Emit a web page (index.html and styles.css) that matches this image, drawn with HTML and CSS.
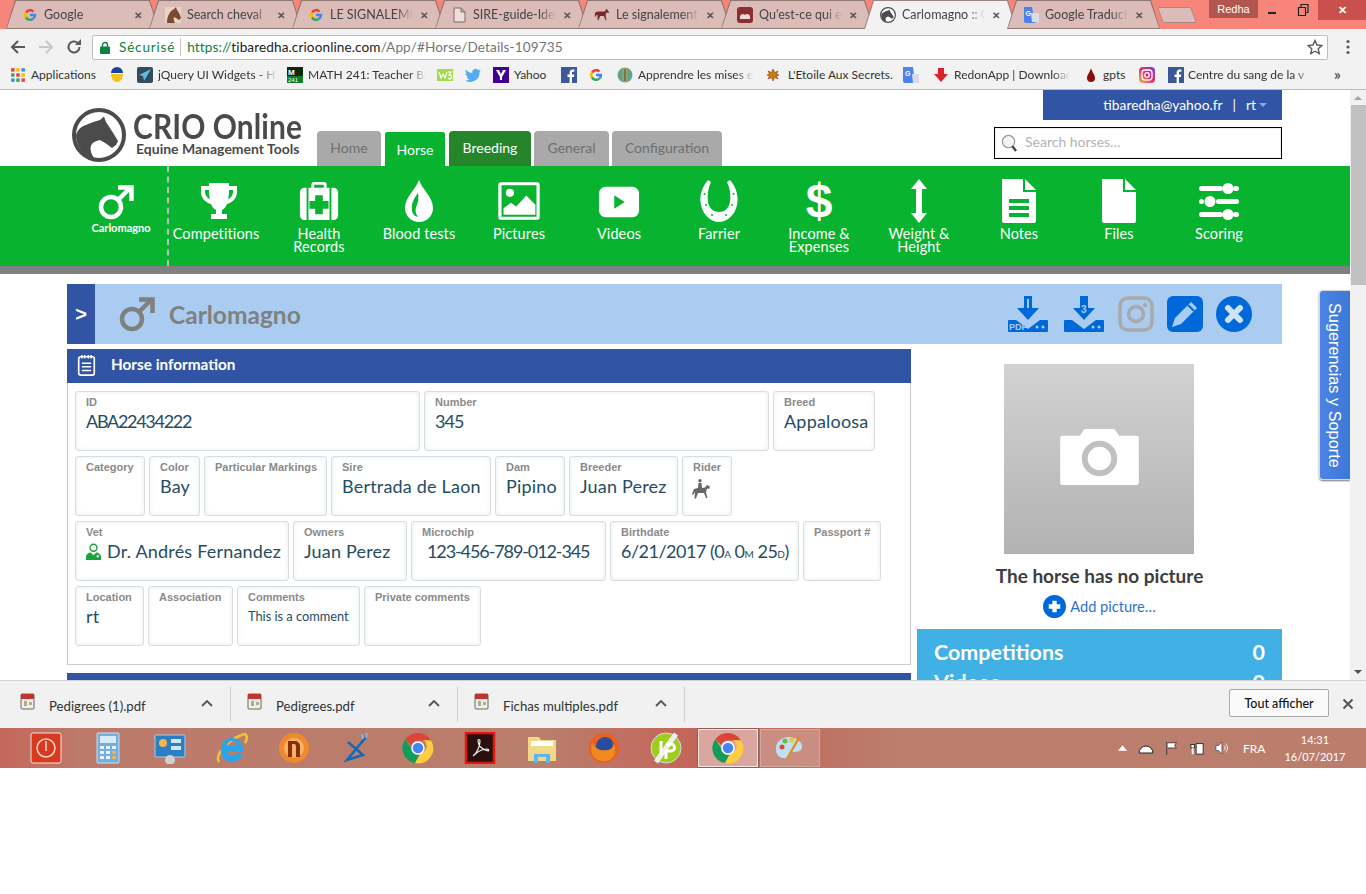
FILE: index.html
```html
<!DOCTYPE html>
<html lang="en">
<head>
<meta charset="utf-8">
<title>Carlomagno :: CRIO Online</title>
<link rel="stylesheet" href="styles.css">
</head>
<body>
<svg class="defs" width="0" height="0">
  <symbol id="g" viewBox="0 0 16 16">
    <path d="M3 4.500A6 6 0 0 1 12.300 3.700L10.600 5.400A3.600 3.600 0 0 0 5 6.500z" fill="#e94335"/>
    <path d="M3 4.500A6 6 0 0 0 3 11.500L5 9.600A3.600 3.600 0 0 1 5 6.500z" fill="#fbbc05"/>
    <path d="M3 11.500A6 6 0 0 0 12 12.500L10.200 10.900A3.600 3.600 0 0 1 5 9.600z" fill="#34a853"/>
    <path d="M14 6.800H8v2.500h3.500A3 3 0 0 1 10.200 10.900L12 12.500A6 6 0 0 0 14 6.800z" fill="#4285f4"/>
  </symbol>
  <symbol id="horsehead" viewBox="0 0 16 16">
    <rect width="16" height="16" fill="#e8d4c4"/>
    <path d="M2 16C2 9 5 4 9 2l2-2 1 3c2 2 3 5 4 8l-2 2-3-2-2-1c-1 2 0 4 1 6z" fill="#7a4a32"/>
  </symbol>
  <symbol id="pony" viewBox="0 0 18 16">
    <path d="M1 6c1-2 3-2 5-2h6l2-3 1 1 2 3-1 1-2-1-1 3 1 6h-1l-2-5H7l-2 5H4l0-6C3 8 2 8 2 10H1z" fill="#7a2a2a"/>
  </symbol>
  <symbol id="logo" viewBox="0 0 54 54">
    <circle cx="27" cy="27" r="25" fill="#fff" stroke="#4b4b4b" stroke-width="4"/>
    <path d="M4 27C6 21 10 18 15 16.500C20 14 25 13 28 12L32 8.500L34 14C38 20 42 26 46 33L44 37L40 40L34 35.500L28 32C23 33 19 35 18.500 40C18.500 44 20 47 22 50A23.500 23.500 0 0 1 4 27z" fill="#4b4b4b"/>
  </symbol>
  <symbol id="male" viewBox="0 0 36 36">
    <circle cx="13" cy="23" r="10" fill="none" stroke="currentColor" stroke-width="4.500"/>
    <path d="M20 16L32 4M20 3.500h13.500V17" fill="none" stroke="currentColor" stroke-width="4.500"/>
  </symbol>
  <symbol id="pdf" viewBox="0 0 16 18">
    <rect x="1" y="1" width="13" height="15" rx="1" fill="#f3efe6" stroke="#666" stroke-width="1"/>
    <rect x="1" y="1" width="13" height="5" fill="#c0362c"/>
    <path d="M4 8h3v5H4zM9 9h3v3H9z" fill="#b5a98f"/>
  </symbol>
  <symbol id="chrome" viewBox="0 0 32 32">
    <path d="M16 1a15 15 0 0 1 13 7.500H16a7.500 7.500 0 0 0-7 4.500L3.500 7A15 15 0 0 1 16 1z" fill="#db4437"/>
    <path d="M3.500 7L9 16a7 7 0 0 0 8 7l-4 8A15 15 0 0 1 3.500 7z" fill="#0f9d58"/>
    <path d="M29 8.500A15 15 0 0 1 13 31l6-10a7 7 0 0 0 2-13z" fill="#ffcd40"/>
    <circle cx="16" cy="16" r="6" fill="#4285f4" stroke="#fff" stroke-width="1.500"/>
  </symbol>
</svg>

<div class="screen">
  <div class="tabstrip">
    <div class="tab"><svg class="fav"><use href="#g"/></svg><span class="tab-title">Google</span><span class="tab-x">✕</span></div>
    <div class="tab"><svg class="fav"><use href="#horsehead"/></svg><span class="tab-title">Search cheval</span><span class="tab-x">✕</span></div>
    <div class="tab"><svg class="fav"><use href="#g"/></svg><span class="tab-title">LE SIGNALEME</span><span class="tab-x">✕</span></div>
    <div class="tab"><svg class="fav" viewBox="0 0 16 16"><path d="M3 1h7l4 4v10H3zM10 1v4h4" fill="#f0dcd8" stroke="#7c6a66"/></svg><span class="tab-title">SIRE-guide-Ider</span><span class="tab-x">✕</span></div>
    <div class="tab"><svg class="fav"><use href="#pony"/></svg><span class="tab-title">Le signalement</span><span class="tab-x">✕</span></div>
    <div class="tab"><svg class="fav" viewBox="0 0 16 16"><rect x="0" y="0" width="16" height="16" rx="3" fill="#8b2f2f"/><path d="M3 11a3 3 0 0 1 5-3 3 3 0 0 1 5 1v3H3z" fill="#f0d8d8"/></svg><span class="tab-title">Qu'est-ce qui e</span><span class="tab-x">✕</span></div>
    <div class="tab tab-on"><svg class="fav" viewBox="0 0 54 54"><use href="#logo"/></svg><span class="tab-title">Carlomagno :: C</span><span class="tab-x">✕</span></div>
    <div class="tab"><svg class="fav" viewBox="0 0 16 16"><path d="M1 0h8l3 16H3a2 2 0 0 1-2-2z" fill="#4c82ee"/><path d="M8 6h8v9H9z" fill="#d9dde2"/><text x="2.500" y="9" font-size="7" font-weight="700" fill="#fff" font-family="Liberation Sans">G</text></svg><span class="tab-title">Google Traduct</span><span class="tab-x">✕</span></div>
    <div class="newtab"></div>
    <div class="winbar">
      <span class="win-user">Redha</span>
      <span class="win-btn"><svg width="12" height="12" viewBox="0 0 12 12"><rect x="1" y="8" width="8" height="2" fill="#222"/></svg></span>
      <span class="win-btn"><svg width="14" height="14" viewBox="0 0 14 14"><path d="M2.500 4.500h7v8h-7zM5 4V1.500h7v8H10" fill="none" stroke="#222" stroke-width="1.200"/></svg></span>
      <span class="win-close">✕</span>
    </div>
  </div>

  <div class="toolbar">
    <svg class="tool" viewBox="0 0 16 16"><path d="M15 8H2M8 2L2 8l6 6" fill="none" stroke="#5a5a5a" stroke-width="2"/></svg>
    <svg class="tool" viewBox="0 0 16 16"><path d="M1 8h13M8 2l6 6-6 6" fill="none" stroke="#c8c8c8" stroke-width="2"/></svg>
    <svg class="tool" viewBox="0 0 16 16"><path d="M13.500 8A5.500 5.500 0 1 1 11.800 4" fill="none" stroke="#5a5a5a" stroke-width="2"/><path d="M9 6h6V0z" fill="#5a5a5a"/></svg>
    <div class="omnibox">
      <svg class="lock" viewBox="0 0 10 13"><path d="M2.500 6V4a2.500 2.500 0 0 1 5 0v2" fill="none" stroke="#0b8043" stroke-width="1.400"/><rect y="5.500" width="10" height="7.500" rx="1" fill="#0b8043"/></svg>
      <span class="secure">Sécurisé</span>
      <span class="omni-sep"></span>
      <span class="url"><span class="url-s">https://</span><span class="url-h">tibaredha.crioonline.com</span>/App/#Horse/Details-109735</span>
      <svg class="star" viewBox="0 0 16 16"><path d="M8 1.500l2 4.500 4.900.500-3.700 3.300 1.100 4.800L8 12.200l-4.300 2.400 1.100-4.800L1.100 6.500 6 6z" fill="none" stroke="#5a5a5a" stroke-width="1.400"/></svg>
    </div>
    <svg class="menu" viewBox="0 0 4 16"><circle cx="2" cy="2.500" r="1.600" fill="#5a5a5a"/><circle cx="2" cy="8" r="1.600" fill="#5a5a5a"/><circle cx="2" cy="13.500" r="1.600" fill="#5a5a5a"/></svg>
  </div>

  <div class="bookmarks">
    <span class="bm bm-apps"><svg class="bm-ic" viewBox="0 0 14 14"><g><rect x="1" y="1" width="3" height="3" fill="#e94335"/><rect x="5.500" y="1" width="3" height="3" fill="#fbbc05"/><rect x="10" y="1" width="3" height="3" fill="#4285f4"/><rect x="1" y="5.500" width="3" height="3" fill="#34a853"/><rect x="5.500" y="5.500" width="3" height="3" fill="#e94335"/><rect x="10" y="5.500" width="3" height="3" fill="#fbbc05"/><rect x="1" y="10" width="3" height="3" fill="#4285f4"/><rect x="5.500" y="10" width="3" height="3" fill="#34a853"/><rect x="10" y="10" width="3" height="3" fill="#e94335"/></g></svg><span class="bm-t">Applications</span></span>
    <span class="bm bm-w1"><svg class="bm-ic" viewBox="0 0 16 16"><path d="M2 6a6 6 0 0 1 12 0z" fill="#1a3f9c"/><path d="M2 7h12c0 5-3 8-6 8S2 12 2 7z" fill="#f0c420"/></svg></span>
    <span class="bm bm-w2"><svg class="bm-ic" viewBox="0 0 16 16"><rect width="16" height="16" rx="2" fill="#374a57"/><path d="M14 2L2 8l4 1 1 5z" fill="#58c1e6"/></svg><span class="bm-t bm-fade">jQuery UI Widgets - H</span></span>
    <span class="bm bm-w3"><svg class="bm-ic" viewBox="0 0 16 16"><rect width="16" height="16" fill="#0a2a0a"/><rect y="9" width="16" height="7" fill="#0e7d25"/><text x="1" y="7.500" font-size="8" font-weight="700" fill="#fff" font-family="Liberation Sans">M</text><text x="1" y="15" font-size="6" fill="#fff" font-family="Liberation Sans">241</text></svg><span class="bm-t bm-fade">MATH 241: Teacher Bi</span></span>
    <span class="bm bm-w4"><svg class="bm-ic" viewBox="0 0 16 16"><rect y="2" width="16" height="12" fill="#a5d94c"/><path d="M2 5l2 6 2-4 2 4 2-6M11 5h3l-2 3a2 2 0 1 1-1 3" fill="none" stroke="#fff" stroke-width="1.200"/></svg></span>
    <span class="bm bm-w5"><svg class="bm-ic" viewBox="0 0 16 16"><path d="M15.500 3.500c-.6.300-1.200.4-1.800.5.600-.4 1.100-1 1.400-1.700-.6.400-1.300.6-2 .8A3.200 3.200 0 0 0 7.500 6C4.900 5.900 2.600 4.600 1 2.700c-.9 1.500-.4 3.400 1 4.300-.5 0-1-.2-1.400-.4 0 1.600 1.100 2.900 2.600 3.200-.5.100-1 .2-1.500.1.400 1.300 1.600 2.200 3 2.200A6.500 6.500 0 0 1 .5 13.400 9.100 9.100 0 0 0 14.500 5.300c.4-.5 1-1.100 1-1.800z" fill="#55acee"/></svg></span>
    <span class="bm bm-w6"><svg class="bm-ic" viewBox="0 0 16 16"><rect width="16" height="16" fill="#410093"/><path d="M3 3h3l2 4 2-4h3l-4 7v3H7v-3z" fill="#fff"/></svg><span class="bm-t">Yahoo</span></span>
    <span class="bm bm-w7"><svg class="bm-ic" viewBox="0 0 16 16"><rect width="16" height="16" fill="#3b5998"/><path d="M11 16v-6h2l.3-2.500H11V6c0-.7.200-1.200 1.200-1.200h1.200V2.600c-.3 0-1-.1-1.800-.1C10.100 2.500 8.600 3.500 8.600 5.600v1.900H6.500V10h2.100v6z" fill="#fff"/></svg></span>
    <span class="bm bm-w8"><svg class="bm-ic"><use href="#g"/></svg></span>
    <span class="bm bm-w9"><svg class="bm-ic" viewBox="0 0 16 16"><circle cx="8" cy="8" r="7.500" fill="#5aa58c"/><rect x="5.500" y="1" width="5" height="14" fill="#a8a060"/><path d="M8 2v12" stroke="#444" stroke-width="1"/></svg><span class="bm-t bm-fade">Apprendre les mises e</span></span>
    <span class="bm bm-w10"><svg class="bm-ic bm-ic-sm" viewBox="0 0 12 12"><path d="M6 0l1.500 3.500L11 2l-1.500 3L12 6 9.500 7 11 10 7.500 8.500 6 12 4.500 8.500 1 10l1.500-3L0 6l2.500-1L1 2l3.500 1.500z" fill="#b8860b" stroke="#a11" stroke-width=".5"/></svg><span class="bm-t">L'Etoile Aux Secrets.</span></span>
    <span class="bm bm-w11"><svg class="bm-ic" viewBox="0 0 16 16"><path d="M0 0h10l2 16H2a2 2 0 0 1-2-2z" fill="#4c82ee"/><path d="M9 7h7v9H10z" fill="#d9dde2"/><text x="2" y="9" font-size="7" font-weight="700" fill="#fff" font-family="Liberation Sans">G</text></svg></span>
    <span class="bm bm-w12"><svg class="bm-ic" viewBox="0 0 16 16"><path d="M5 1h6v6h4l-7 8-7-8h4z" fill="#d8232a"/></svg><span class="bm-t bm-fade">RedonApp | Downloac</span></span>
    <span class="bm bm-w13"><svg class="bm-ic" viewBox="0 0 16 16"><path d="M8 1c1 4 4 7 4 10a4 4 0 0 1-8 0c0-3 3-6 4-10z" fill="#8a0f0f"/></svg><span class="bm-t">gpts</span></span>
    <span class="bm bm-w14"><svg class="bm-ic" viewBox="0 0 16 16"><defs><linearGradient id="ig" x1="0" y1="1" x2="1" y2="0"><stop offset="0" stop-color="#fdb24b"/><stop offset=".5" stop-color="#e1306c"/><stop offset="1" stop-color="#7d3bd1"/></linearGradient></defs><rect width="16" height="16" rx="4" fill="url(#ig)"/><rect x="3" y="3" width="10" height="10" rx="3" fill="none" stroke="#fff" stroke-width="1.300"/><circle cx="8" cy="8" r="2.300" fill="none" stroke="#fff" stroke-width="1.300"/></svg></span>
    <span class="bm bm-w15"><svg class="bm-ic" viewBox="0 0 16 16"><rect width="16" height="16" fill="#3b5998"/><path d="M11 16v-6h2l.3-2.500H11V6c0-.7.200-1.200 1.200-1.200h1.200V2.600c-.3 0-1-.1-1.800-.1C10.100 2.500 8.600 3.500 8.600 5.600v1.900H6.500V10h2.100v6z" fill="#fff"/></svg><span class="bm-t bm-fade">Centre du sang de la v</span></span>
    <span class="bm-more">»</span>
  </div>

  <div class="viewport">
    <div class="page">
      <header class="head">
        <div class="brand">
          <svg class="logo" viewBox="0 0 54 54"><use href="#logo"/></svg>
          <div class="brand-text">
            <div class="brand-name">CRIO Online</div>
            <div class="brand-sub">Equine Management Tools</div>
          </div>
        </div>
        <nav class="mainnav">
          <a class="mtab mtab-home">Home</a>
          <a class="mtab mtab-horse">Horse</a>
          <a class="mtab mtab-breed">Breeding</a>
          <a class="mtab mtab-gen">General</a>
          <a class="mtab mtab-conf">Configuration</a>
        </nav>
        <div class="head-right">
          <div class="userbox"><span>tibaredha@yahoo.fr</span><span class="user-sep">|</span><span>rt</span><span class="caret"></span></div>
          <div class="search">
            <svg class="search-ic" viewBox="0 0 18 20"><circle cx="8" cy="8" r="6.500" fill="#f4f4f4" stroke="#999" stroke-width="1.300"/><path d="M12 13l4 5" stroke="#444" stroke-width="2.500"/></svg>
            <span class="search-ph">Search horses…</span>
          </div>
        </div>
      </header>

      <div class="greenbar">
        <div class="gb-me">
          <svg class="gi-male"><use href="#male"/></svg>
          <span class="gb-me-t">Carlomagno</span>
        </div>
        <div class="gb-item gb-first">
          <svg class="gi" viewBox="0 0 40 40"><path d="M10 2h20v3h8v6c0 6-5 11-10 12-1 3-3 5-5 6v4h5v5H12v-5h5v-4c-2-1-4-3-5-6C7 22 2 17 2 11V5h8zM6 9v2c0 3 2 6 5 7-1-3-1-6-1-9zM34 9h-4c0 3 0 6-1 9 3-1 5-4 5-7z" fill="#fff" fill-rule="evenodd"/></svg>
          <span class="gb-t">Competitions</span>
        </div>
        <div class="gb-item">
          <svg class="gi" viewBox="0 0 44 40"><path d="M14 6V3a3 3 0 0 1 3-3h10a3 3 0 0 1 3 3v3h3v34H11V6zM17 6h10V3H17z" fill="#fff" fill-rule="evenodd"/><path d="M7 6h2v34H7a5 5 0 0 1-5-5V11a5 5 0 0 1 5-5zM35 6h2a5 5 0 0 1 5 5v24a5 5 0 0 1-5 5h-2z" fill="#fff"/><path d="M18 14h8v6h6v8h-6v6h-8v-6h-6v-8h6z" fill="#07b32f"/></svg>
          <span class="gb-t">Health<br>Records</span>
        </div>
        <div class="gb-item">
          <svg class="gi gi-tall" viewBox="0 0 40 44"><path d="M20 1c3 9 14 17 14 28a14 14 0 0 1-28 0C6 18 17 10 20 1z" fill="#fff"/><path d="M19 14c-4 5-7 11-6 17 0 3 2 6 6 7-3-4-3-8-1-12 1-3 2-7 1-12z" fill="#07b32f"/></svg>
          <span class="gb-t">Blood tests</span>
        </div>
        <div class="gb-item">
          <svg class="gi" viewBox="0 0 46 44"><rect x="2" y="3" width="42" height="38" rx="1" fill="none" stroke="#fff" stroke-width="3.500"/><circle cx="13" cy="13" r="4.500" fill="#fff"/><path d="M6 37v-7l8-6 6 4 11-12 10 10v11z" fill="#fff"/></svg>
          <span class="gb-t">Pictures</span>
        </div>
        <div class="gb-item">
          <svg class="gi" viewBox="0 0 44 40"><rect x="1" y="5" width="42" height="32" rx="7" fill="#fff"/><path d="M17 14l11 7-11 7z" fill="#07b32f"/></svg>
          <span class="gb-t">Videos</span>
        </div>
        <div class="gb-item">
          <svg class="gi gi-tall" viewBox="0 0 40 44"><path d="M9 1C3 8 0 17 2 26c2 10 10 17 18 17s16-7 18-17c2-9-1-18-7-25l-3 2c3 6 4 14 3 20-1 6-5 10-11 10S10 29 9 23C8 17 9 9 12 3z" fill="#fff"/><g fill="#07b32f"><circle cx="5.500" cy="15" r="1"/><circle cx="7" cy="26" r="1"/><circle cx="13" cy="36" r="1"/><circle cx="27" cy="36" r="1"/><circle cx="33" cy="26" r="1"/><circle cx="34.500" cy="15" r="1"/></g></svg>
          <span class="gb-t">Farrier</span>
        </div>
        <div class="gb-item">
          <span class="gi gi-dollar">$</span>
          <span class="gb-t">Income &amp;<br>Expenses</span>
        </div>
        <div class="gb-item">
          <svg class="gi gi-tall" viewBox="0 0 40 44"><path d="M20 0l8 10h-5v24h5l-8 10-8-10h5V10h-5z" fill="#fff"/></svg>
          <span class="gb-t">Weight &amp;<br>Height</span>
        </div>
        <div class="gb-item">
          <svg class="gi gi-tall" viewBox="0 0 40 44"><path d="M3 0h21v13h13v29a2 2 0 0 1-2 2H5a2 2 0 0 1-2-2z" fill="#fff"/><path d="M26 0l11 11H26z" fill="#fff"/><path d="M10 20h20v4H10zM10 27h20v4H10zM10 34h20v4H10z" fill="#07b32f"/></svg>
          <span class="gb-t">Notes</span>
        </div>
        <div class="gb-item">
          <svg class="gi gi-tall" viewBox="0 0 40 44"><path d="M3 0h21v13h13v29a2 2 0 0 1-2 2H5a2 2 0 0 1-2-2z" fill="#fff"/><path d="M26 0l11 11H26z" fill="#fff"/></svg>
          <span class="gb-t">Files</span>
        </div>
        <div class="gb-item">
          <svg class="gi" viewBox="0 0 42 40"><g fill="#fff"><rect x="1" y="5" width="24" height="5" rx="2.500"/><circle cx="30" cy="7.500" r="5.500"/><rect x="35" y="5" width="6" height="5" rx="2.500"/><rect x="1" y="18" width="5" height="5" rx="2.500"/><circle cx="12" cy="20.500" r="5.500"/><rect x="18" y="18" width="23" height="5" rx="2.500"/><rect x="1" y="31" width="24" height="5" rx="2.500"/><circle cx="30" cy="33.500" r="5.500"/><rect x="35" y="31" width="6" height="5" rx="2.500"/></g></svg>
          <span class="gb-t">Scoring</span>
        </div>
      </div>
      <div class="greybar"></div>

      <div class="content">
        <div class="titlebar">
          <div class="tb-toggle">&gt;</div>
          <svg class="tb-male"><use href="#male"/></svg>
          <h1 class="tb-name">Carlomagno</h1>
          <div class="tb-actions">
            <svg class="act act-dl act-dl1" viewBox="0 0 40 36"><path d="M16 0h8v12h7L20 24 9 12h7z" fill="#0069d9"/><path d="M1 24h7l12 9 12-9h7a1 1 0 0 1 1 1v10a1 1 0 0 1-1 1H1a1 1 0 0 1-1-1V25a1 1 0 0 1 1-1z" fill="#0069d9"/><path d="M19 3h2v9h-2z" fill="#a9ccf0"/><circle cx="29" cy="31" r="1.500" fill="#a9ccf0"/><circle cx="35" cy="31" r="1.500" fill="#a9ccf0"/><text x="1" y="34" font-size="9" font-weight="700" fill="#a9ccf0" font-family="Liberation Sans">PDF</text></svg>
            <svg class="act act-dl act-dl2" viewBox="0 0 40 36"><path d="M16 0h8v12h7L20 24 9 12h7z" fill="#0069d9"/><path d="M1 24h7l12 9 12-9h7a1 1 0 0 1 1 1v10a1 1 0 0 1-1 1H1a1 1 0 0 1-1-1V25a1 1 0 0 1 1-1z" fill="#0069d9"/><circle cx="29" cy="31" r="1.500" fill="#a9ccf0"/><circle cx="35" cy="31" r="1.500" fill="#a9ccf0"/><text x="17" y="17" font-size="10" font-weight="700" fill="#a9ccf0" font-family="Liberation Sans">3</text></svg>
            <svg class="act" viewBox="0 0 36 36"><rect x="2" y="2" width="32" height="32" rx="8" fill="none" stroke="#a9a9a9" stroke-width="3.500"/><circle cx="18" cy="18" r="7.500" fill="none" stroke="#a9a9a9" stroke-width="3.500"/><circle cx="27" cy="9" r="2.200" fill="#a9a9a9"/></svg>
            <svg class="act" viewBox="0 0 36 36"><rect width="36" height="36" rx="6" fill="#0069d9"/><path d="M24 6l6 6-16 16-9 3 3-9z" fill="#a9ccf0"/><path d="M21 9l6 6" stroke="#0069d9" stroke-width="2"/></svg>
            <svg class="act" viewBox="0 0 36 36"><circle cx="18" cy="18" r="18" fill="#0069d9"/><path d="M12 12l12 12M24 12L12 24" stroke="#cfe2f6" stroke-width="6" stroke-linecap="round"/></svg>
          </div>
        </div>

        <div class="columns">
          <section class="info">
            <div class="panel-head">
              <svg class="ph-ic" viewBox="0 0 20 24"><rect x="1.500" y="3" width="17" height="20" rx="2" fill="none" stroke="#fff" stroke-width="1.800"/><path d="M5 1v4M8 1v4M12 1v4M15 1v4M5 10h10M5 14h10M5 18h10" stroke="#fff" stroke-width="1.600"/></svg>
              <span class="ph-t">Horse information</span>
            </div>
            <div class="panel-body">
              <div class="frow">
                <div class="fld w345"><label class="lbl">ID</label><div class="val val-id">ABA22434222</div></div>
                <div class="fld w345"><label class="lbl">Number</label><div class="val val-num">345</div></div>
                <div class="fld w102"><label class="lbl">Breed</label><div class="val">Appaloosa</div></div>
              </div>
              <div class="frow">
                <div class="fld w70"><label class="lbl">Category</label></div>
                <div class="fld w51"><label class="lbl">Color</label><div class="val">Bay</div></div>
                <div class="fld w123"><label class="lbl">Particular Markings</label></div>
                <div class="fld w160"><label class="lbl">Sire</label><div class="val">Bertrada de Laon</div></div>
                <div class="fld w70"><label class="lbl">Dam</label><div class="val">Pipino</div></div>
                <div class="fld w109"><label class="lbl">Breeder</label><div class="val">Juan Perez</div></div>
                <div class="fld w50"><label class="lbl">Rider</label>
                  <svg class="rider" viewBox="0 0 20 20"><circle cx="9" cy="1.800" r="1.700" fill="#666"/><path d="M7.500 4h3l.5 5 3-.5 2-2.500 3 1.500-1 2.500-2-.5-1 4 1.500 5.500h-1.500L13 14H7l-2 5.500H3.500L4 13l-2 3-1-1 2-5 4-1z" fill="#666"/></svg>
                </div>
              </div>
              <div class="frow">
                <div class="fld w214"><label class="lbl">Vet</label><div class="val val-vet">
                  <svg class="vet" viewBox="0 0 18 18"><circle cx="9" cy="5" r="3.700" fill="#fff" stroke="#1aa33a" stroke-width="1.500"/><path d="M1 18v-3c0-3 3-5 5-5l3 3 3-3c2 0 5 2 5 5v3z" fill="#1aa33a"/><path d="M12 14h3M13.500 12.500v3" stroke="#fff"/></svg><span>Dr. Andrés Fernandez</span></div></div>
                <div class="fld w114"><label class="lbl">Owners</label><div class="val">Juan Perez</div></div>
                <div class="fld w195"><label class="lbl">Microchip</label><div class="val val-chip">123-456-789-012-345</div></div>
                <div class="fld w189"><label class="lbl">Birthdate</label><div class="val val-date">6/21/2017 (0<small>A</small> 0<small>M</small> 25<small>D</small>)</div></div>
                <div class="fld w78"><label class="lbl">Passport #</label></div>
              </div>
              <div class="frow">
                <div class="fld w69"><label class="lbl">Location</label><div class="val">rt</div></div>
                <div class="fld w85"><label class="lbl">Association</label></div>
                <div class="fld w123"><label class="lbl">Comments</label><div class="val-sm">This is a comment</div></div>
                <div class="fld w117"><label class="lbl">Private comments</label></div>
              </div>
            </div>
            <div class="panel-head panel-next"></div>
          </section>

          <aside class="side">
            <div class="photo">
              <svg class="camera" viewBox="0 0 80 58"><path d="M2 8h18l4-6a3 3 0 0 1 2-1h28a3 3 0 0 1 2 1l4 6h18a2 2 0 0 1 2 2v46a2 2 0 0 1-2 2H2a2 2 0 0 1-2-2V10a2 2 0 0 1 2-2z" fill="#fff"/><circle cx="40" cy="31" r="15" fill="none" stroke="#c0c0c0" stroke-width="6"/></svg>
            </div>
            <div class="nopic">The horse has no picture</div>
            <div class="addpic">
              <svg class="add-ic" viewBox="0 0 24 24"><circle cx="12" cy="12" r="12" fill="#0069d9"/><path d="M12 6v12M6 12h12" stroke="#fff" stroke-width="4.500"/></svg>
              <span>Add picture…</span>
            </div>
            <div class="stats">
              <div class="stat"><span>Competitions</span><span>0</span></div>
              <div class="stat"><span>Videos</span><span>0</span></div>
            </div>
          </aside>
        </div>
      </div>

      <a class="support">Sugerencias y Soporte</a>
    </div>

    <div class="scroll">
      <span class="sc-up"></span>
      <span class="sc-thumb"></span>
      <span class="sc-track"></span>
      <span class="sc-dn"></span>
    </div>
  </div>

  <div class="downloads">
    <div class="dl"><svg class="dl-ic"><use href="#pdf"/></svg><span class="dl-t">Pedigrees (1).pdf</span><svg class="dl-ch" viewBox="0 0 12 8"><path d="M1 7l5-5 5 5" fill="none" stroke="#555" stroke-width="1.800"/></svg></div>
    <div class="dl"><svg class="dl-ic"><use href="#pdf"/></svg><span class="dl-t">Pedigrees.pdf</span><svg class="dl-ch" viewBox="0 0 12 8"><path d="M1 7l5-5 5 5" fill="none" stroke="#555" stroke-width="1.800"/></svg></div>
    <div class="dl"><svg class="dl-ic"><use href="#pdf"/></svg><span class="dl-t">Fichas multiples.pdf</span><svg class="dl-ch" viewBox="0 0 12 8"><path d="M1 7l5-5 5 5" fill="none" stroke="#555" stroke-width="1.800"/></svg></div>
    <button class="dl-all">Tout afficher</button>
    <svg class="dl-x" viewBox="0 0 12 12"><path d="M1.500 1.500l9 9M10.500 1.500l-9 9" stroke="#555" stroke-width="2"/></svg>
  </div>

  <div class="taskbar">
    <div class="task"><svg class="ti" viewBox="0 0 32 32"><rect x="1" y="1" width="30" height="30" rx="2" fill="#d83a1e" stroke="#f3e3dd"/><circle cx="16" cy="16" r="9" fill="none" stroke="#f8d8cc" stroke-width="1.500"/><path d="M16 9v10" stroke="#f8d8cc" stroke-width="1.500"/></svg></div>
    <div class="task"><svg class="ti" viewBox="0 0 32 32"><rect x="5" y="1" width="22" height="30" rx="1" fill="#6fb0e0" stroke="#c8dff0"/><rect x="8" y="4" width="16" height="7" fill="#d8ecf8"/><g fill="#e8f2fa"><rect x="8" y="14" width="4" height="3"/><rect x="14" y="14" width="4" height="3"/><rect x="20" y="14" width="4" height="3"/><rect x="8" y="19" width="4" height="3"/><rect x="14" y="19" width="4" height="3"/><rect x="20" y="19" width="4" height="3" fill="#f3b14c"/><rect x="8" y="24" width="4" height="3"/><rect x="14" y="24" width="4" height="3"/><rect x="20" y="24" width="4" height="3" fill="#f3b14c"/></g></svg></div>
    <div class="task"><svg class="ti" viewBox="0 0 32 32"><rect x="1" y="3" width="30" height="22" rx="1" fill="#2d7fc4" stroke="#a8cdea"/><circle cx="9" cy="11" r="4" fill="#f4b54b"/><rect x="17" y="7" width="10" height="4" fill="#d3e6f5"/><rect x="17" y="14" width="10" height="4" fill="#d3e6f5"/><circle cx="16" cy="28" r="5" fill="#cfcfcf"/></svg></div>
    <div class="task"><svg class="ti" viewBox="0 0 32 32"><path d="M3 30C-1 24 9 9 28 2c3 0 4 4 1 9" fill="none" stroke="#f1c232" stroke-width="2.500"/><path fill-rule="evenodd" d="M5 17a11 11 0 0 1 22 0v2H11a5.500 5.500 0 0 0 10 2h6a11 11 0 0 1-22-4zM11 14h10a5 5 0 0 0-10 0z" fill="#2aa5e8"/></svg></div>
    <div class="task"><svg class="ti" viewBox="0 0 32 32"><circle cx="16" cy="16" r="15" fill="#ef8a2c"/><circle cx="16" cy="16" r="10" fill="#f6b26b"/><path d="M10 25V9h7a5 5 0 0 1 5 5v11h-4V14a2 2 0 0 0-2-2h-2v13z" fill="#8a2e0c"/></svg></div>
    <div class="task"><svg class="ti" viewBox="0 0 32 32"><path d="M26 5L7 28l16-5L8 10" fill="none" stroke="#1268b8" stroke-width="2.500"/><path d="M22 2l1 5M27 1l-1 5" stroke="#8ab4d8" stroke-width="2"/></svg></div>
    <div class="task"><svg class="ti"><use href="#chrome"/></svg></div>
    <div class="task"><svg class="ti" viewBox="0 0 32 32"><rect x="2" y="1" width="28" height="30" fill="#2a0f0f" stroke="#e3160d" stroke-width="2.500"/><path d="M9 24c4-3 7-10 7-15 0-2-2-2-2 0 0 5 5 9 10 10 1 0 1-2-1-2-4 0-9 2-14 7z" fill="none" stroke="#eee" stroke-width="1.200"/></svg></div>
    <div class="task"><svg class="ti" viewBox="0 0 32 32"><path d="M2 5h11l2 3h15v21H2z" fill="#f2d98a"/><path d="M5 9h22v5H5z" fill="#fff"/><path d="M8 22h16v9h-4v-6h-8v6H8z" fill="#5fb4e8"/></svg></div>
    <div class="task"><svg class="ti" viewBox="0 0 32 32"><circle cx="16" cy="16" r="15" fill="#e8611e"/><circle cx="17" cy="14" r="9" fill="#2a4c9a"/><path d="M4 10c3 8 10 9 16 8 5-1 6-5 4-8 4 4 5 12-1 17-6 4-14 2-18-3-2-4-2-9-1-14z" fill="#f18a1e"/></svg></div>
    <div class="task"><svg class="ti" viewBox="0 0 32 32"><circle cx="16" cy="16" r="15" fill="#a0cc1e" stroke="#ddd"/><path d="M6 30L26 2" stroke="#eee" stroke-width="5"/><path d="M11 9v14M16 12h5a3 3 0 0 1 0 7h-5v8" fill="none" stroke="#fff" stroke-width="3"/></svg></div>
    <div class="task task-act"><svg class="ti"><use href="#chrome"/></svg></div>
    <div class="task task-open"><svg class="ti" viewBox="0 0 32 32"><path d="M15 5C7 5 1 11 2 18c0 6 6 9 10 8 3-1 2-4 4-5 4-2 11 0 12-5 1-6-6-11-13-11z" fill="#bde0f2"/><circle cx="8" cy="15" r="2.500" fill="#e0463c"/><circle cx="11" cy="9" r="2.500" fill="#6cbb3c"/><circle cx="18" cy="8" r="2.500" fill="#f4c430"/><path d="M13 27L26 4" stroke="#e08b2a" stroke-width="2.500"/></svg></div>
    <div class="tray">
      <svg class="tr-up" viewBox="0 0 10 6"><path d="M5 0l5 6H0z" fill="#fff"/></svg>
      <svg class="tr-cloud" viewBox="0 0 16 12"><path d="M1 11a7 7 0 0 1 14 0z" fill="#fff" stroke="#222"/></svg>
      <svg class="tr-ic" viewBox="0 0 16 16"><path d="M2 1v15M3 2h10l-2 3 2 3H3" fill="#fff" stroke="#333"/></svg>
      <svg class="tr-ic" viewBox="0 0 16 16"><rect x="7" y="3" width="8" height="12" fill="#fff" stroke="#222"/><rect x="1" y="4" width="4" height="4" fill="#fff" stroke="#222"/><path d="M3 8v7" stroke="#fff" stroke-width="2"/></svg>
      <svg class="tr-ic" viewBox="0 0 16 16"><path d="M1 5h3l4-4v14l-4-4H1z" fill="#fff" stroke="#555"/><path d="M10 5c2 2 2 4 0 6M12 3c3 3 3 7 0 10" fill="none" stroke="#fff"/></svg>
      <span class="tr-lang">FRA</span>
      <span class="tr-clock"><span>14:31</span><span>16/07/2017</span></span>
    </div>
  </div>
</div>
</body>
</html>
```
FILE: styles.css
```css
* { box-sizing: border-box; }
html, body { margin: 0; padding: 0; background: #fff; }
body { width: 1366px; height: 894px; overflow: hidden; font-family: "Lato", "Liberation Sans", sans-serif; }
.defs { position: absolute; }
svg { display: block; flex: none; }
.screen { width: 1366px; height: 768px; display: flex; flex-direction: column; overflow: hidden; }

/* Browser tabs */
.tabstrip { height: 29px; flex: none; background: #f8857a; display: flex; padding-left: 6px; position: relative; }
.tab { width: 153px; height: 29px; margin-right: -10px; flex: none; position: relative; display: flex; align-items: center; padding-left: 16px; font-size: 12.500px; color: #444;
  clip-path: polygon(0 100%, 9px 0, 144px 0, 153px 100%); background: #8f7772; }
.tab::before { content: ""; position: absolute; inset: 1px 1px 1px 1px; background: #dcbcb8; clip-path: polygon(0 100%, 9px 0, 142px 0, 151px 100%); }
.tab > * { position: relative; }
.tab-on { background: #9a8580; }
.tab-on::before { background: #f2f2f2; bottom: 0; }
.fav { width: 16px; height: 16px; }
.tab-title { width: 83px; margin-left: 6px; white-space: nowrap; overflow: hidden; -webkit-mask-image: linear-gradient(90deg, #000 80%, transparent); mask-image: linear-gradient(90deg, #000 80%, transparent); }
.tab-x { margin-left: 4px; font-size: 10px; color: #555; font-weight: 700; width: 14px; text-align: center; }
.newtab { width: 34px; height: 16px; margin: 7px 0 0 10px; background: #dcbcb8; border: 1px solid #a88; transform: skewX(20deg); border-radius: 2px; flex: none; }
.winbar { position: absolute; right: 0; top: 0; display: flex; height: 20px; }
.win-user { width: 49px; height: 18px; background: #b0564f; color: #fff; font-size: 11px; text-align: center; line-height: 18px; font-family: "Liberation Sans", sans-serif; }
.win-btn { width: 30px; display: flex; align-items: center; justify-content: center; }
.win-close { width: 48px; background: #c9504c; color: #fff; text-align: center; line-height: 20px; font-size: 11px; font-weight: 700; margin-left: 0; }

/* Toolbar */
.toolbar { height: 33px; flex: none; background: #f2f2f2; display: flex; align-items: center; padding: 3px 0 0 10px; }
.tool { width: 16px; height: 16px; margin-right: 12px; }
.tool:nth-child(3) { margin-right: 10px; }
.omnibox { width: 1236px; height: 25px; background: #fff; border: 1px solid #bdbdbd; border-radius: 2px; display: flex; align-items: center; padding-left: 7px; font-size: 13.600px; color: #757575; flex: none; }
.lock { width: 10px; height: 13px; }
.secure { color: #0b8043; margin-left: 9px; letter-spacing: .8px; }
.omni-sep { width: 1px; height: 18px; background: #c8c8c8; margin: 0 6px 0 5px; }
.url { flex: 1; letter-spacing: .1px; }
.url-s { color: #0b8043; }
.url-h { color: #222; }
.star { width: 16px; height: 16px; margin-right: 4px; }
.menu { width: 4px; height: 16px; margin-left: 18px; }

/* Bookmarks */
.bookmarks { height: 28px; flex: none; background: #f2f2f2; border-bottom: 1px solid #bbb; display: flex; align-items: center; font-size: 12px; color: #333; padding: 0 0 2px 10px; position: relative; }
.bm { display: flex; align-items: center; flex: none; }
.bm-ic { width: 16px; height: 16px; }
.bm-ic-sm { width: 12px; height: 12px; }
.bm-t { margin-left: 5px; white-space: nowrap; }
.bm-fade { overflow: hidden; -webkit-mask-image: linear-gradient(90deg, #000 85%, transparent); mask-image: linear-gradient(90deg, #000 85%, transparent); }
.bm-apps { width: 99px; }
.bm-w1 { width: 28px; }
.bm-w2 { width: 150px; }
.bm-w2 .bm-t { width: 119px; margin-left: 5px; }
.bm-w3 { width: 150px; }
.bm-w3 .bm-t { width: 118px; margin-left: 5px; }
.bm-w4 { width: 28px; }
.bm-w5 { width: 28px; }
.bm-w6 { width: 68px; }
.bm-w7 { width: 27px; }
.bm-w8 { width: 29px; }
.bm-w9 { width: 150px; }
.bm-w9 .bm-t { width: 116px; }
.bm-w10 { width: 136px; }
.bm-w10 .bm-t { margin-left: 9px; }
.bm-w11 { width: 30px; }
.bm-w12 { width: 150px; }
.bm-w12 .bm-t { width: 116px; }
.bm-w13 { width: 56px; }
.bm-w13 .bm-t { margin-left: 4px; }
.bm-w14 { width: 29px; }
.bm-w15 { width: 150px; }
.bm-w15 .bm-t { width: 125px; margin-left: 4px; }
.bm-more { position: absolute; left: 1334px; top: 3px; font-size: 15px; color: #555; font-weight: 700; }

/* Page viewport */
.viewport { height: 590px; flex: none; display: flex; overflow: hidden; }
.page { width: 1350px; height: 590px; flex: none; position: relative; overflow: hidden; background: #fff; }
.scroll { width: 16px; flex: none; background: #f1f1f1; display: flex; flex-direction: column; align-items: center; }
.sc-up { width: 0; height: 0; margin: 6px 0 5px; border: 4px solid transparent; border-top: 0; border-bottom: 4px solid #a3a3a3; }
.sc-thumb { width: 15px; height: 180px; background: #c1c1c1; }
.sc-track { flex: 1; }
.sc-dn { width: 0; height: 0; margin: 0 0 6px; border: 4px solid transparent; border-bottom: 0; border-top: 4px solid #505050; }

/* Site header */
.head { height: 76px; display: flex; position: relative; padding-left: 72px; }
.brand { display: flex; align-items: flex-start; padding-top: 18px; width: 245px; flex: none; }
.logo { width: 54px; height: 54px; }
.brand-text { margin-left: 7px; color: #4a4a4a; font-weight: 700; white-space: nowrap; }
.brand-name { font-size: 34px; line-height: 34px; margin-top: 1px; letter-spacing: .1px; transform: scaleX(.88); transform-origin: left; }
.brand-sub { font-size: 14px; line-height: 15px; margin: -2px 0 0 3px; }
.mainnav { display: flex; align-self: flex-end; gap: 3px; }
.mtab { height: 35px; background: #a9a9a9; color: #6f6f6f; border-radius: 4px 4px 0 0; font-size: 14px; line-height: 33px; text-align: center; }
.mtab-home { width: 64px; }
.mtab-horse { background: #07b32f; color: #fff; border: 2px solid #fff; border-bottom: 0; height: 36px; line-height: 35px; margin: -1px -1px 0; width: 64px; }
.mtab-breed { width: 82px; background: #25852a; color: #fff; }
.mtab-gen { width: 75px; }
.mtab-conf { width: 110px; }
.head-right { position: absolute; left: 994px; top: 0; width: 288px; display: flex; flex-direction: column; align-items: flex-end; }
.userbox { width: 239px; height: 30px; background: #3155a4; color: #fff; font-size: 13.800px; line-height: 30px; display: flex; justify-content: flex-end; align-items: center; padding-right: 15px; }
.user-sep { margin: 0 10px; }
.caret { width: 0; height: 0; margin-left: 3px; border: 4px solid transparent; border-top: 4px solid #8ea6d6; border-bottom: 0; }
.search { width: 288px; height: 32px; margin-top: 7px; border: 1px solid #000; box-shadow: inset 0 0 0 1px #f0f0f0; display: flex; align-items: center; padding-left: 6px; }
.search-ic { width: 17px; height: 19px; }
.search-ph { margin-left: 7px; font-size: 14px; line-height: 18px; margin-top: -2px; color: #b4b4b4; }

/* Green nav */
.greenbar { height: 100px; background: #07b32f; display: flex; padding-left: 67px; color: #fff; }
.gb-me { width: 102px; height: 100px; flex: none; border-right: 2px dashed #bdbdbd; display: flex; flex-direction: column; align-items: center; padding-top: 18px; }
.gi-male { width: 36px; height: 36px; color: #fff; margin-right: 2px; }
.gb-me-t { font-size: 11px; line-height: 13px; font-weight: 700; margin: 1px 0 0 8px; }
.gb-item { width: 100px; flex: none; display: flex; flex-direction: column; align-items: center; text-align: center; padding-top: 15px; }
.gi { width: 42px; height: 40px; flex: none; }
.gi-tall { height: 44px; margin: -2px 0; }
.gb-t { font-size: 14.500px; line-height: 13px; margin-top: 6px; letter-spacing: .1px; }
.gb-first .gb-t { margin-left: -6px; }
.gi-dollar { font: 700 48px/40px "Liberation Sans", sans-serif; text-align: center; }
.greybar { height: 8px; background: #808080; }

/* Content */
.content { padding: 10px 68px 0 67px; }
.titlebar { height: 60px; background: #a9ccf0; display: flex; align-items: center; }
.tb-toggle { width: 28px; height: 60px; background: #3155a4; color: #fff; font: 700 20px/60px "Liberation Sans", sans-serif; text-align: center; flex: none; }
.tb-male { width: 36px; height: 36px; margin-left: 24px; color: #808080; }
.tb-name { margin: 0 0 0 14px; font-size: 24.500px; font-weight: 700; color: #808080; }
.tb-actions { margin-left: auto; display: flex; align-items: center; gap: 13px; padding-right: 30px; }
.act { width: 36px; height: 36px; }
.act-dl { width: 40px; }
.act-dl1 { margin-right: 3px; }
.act-dl2 { margin-right: 1px; }

.columns { display: flex; margin-top: 5px; }
.info { width: 844px; flex: none; }
.panel-head { height: 34px; background: #3155a4; color: #fff; display: flex; align-items: center; padding-left: 10px; }
.ph-ic { width: 19px; height: 22px; margin-top: -2px; }
.ph-t { margin: -4px 0 0 15px; font-size: 15.300px; font-weight: 700; }
.panel-body { height: 282px; border: 1px solid #ccc; border-top: 0; padding: 8px 7px 0; display: flex; flex-direction: column; gap: 5px; }
.panel-next { margin-top: 8px; }
.frow { display: flex; gap: 4px; height: 60px; flex: none; }
.fld { height: 60px; flex: none; border: 1px solid #d7dee2; border-radius: 3px; box-shadow: inset 0 0 4px rgba(120,150,170,.18); padding: 4px 0 0 10px; overflow: hidden; }
.lbl { display: block; font: 700 11px/13px "Liberation Sans", sans-serif; color: #8a8a8a; white-space: nowrap; }
.val { font-size: 18px; line-height: 24px; color: #264c63; white-space: nowrap; letter-spacing: .2px; }
.val small { font-size: 10px; }
.val-id { letter-spacing: -1.300px; }
.val-num { letter-spacing: -1px; }
.val-chip { margin-left: 5px; letter-spacing: -1.100px; }
.val-date { letter-spacing: -.5px; }
.val-sm { font-size: 12.800px; line-height: 17px; margin-top: 4px; color: #264c63; white-space: nowrap; }
.val-vet { display: flex; align-items: center; margin-left: -1px; }
.vet { width: 17px; height: 17px; margin-right: 5px; }
.rider { width: 20px; height: 20px; margin: 5px 0 0 -2px; }
.w345 { width: 345px; }
.w102 { width: 102px; }
.w70 { width: 70px; }
.w51 { width: 51px; }
.w123 { width: 123px; }
.w160 { width: 160px; }
.w109 { width: 109px; }
.w50 { width: 50px; }
.w214 { width: 214px; }
.w114 { width: 114px; }
.w195 { width: 195px; }
.w189 { width: 189px; }
.w78 { width: 78px; }
.w69 { width: 69px; }
.w85 { width: 85px; }
.w117 { width: 117px; }

.side { width: 365px; margin-left: 6px; flex: none; display: flex; flex-direction: column; align-items: center; }
.photo { width: 190px; height: 190px; margin: 15px 0 0 -1px; background: linear-gradient(#d2d2d2, #b2b2b2); display: flex; align-items: center; justify-content: center; }
.camera { width: 79px; height: 57px; margin-top: -6px; }
.nopic { margin-top: 12px; font-size: 19px; line-height: 20px; font-weight: 700; color: #3d3d3d; }
.addpic { display: flex; align-items: center; height: 24px; margin-top: 8px; font-size: 14.600px; color: #2d6fe0; }
.add-ic { width: 23px; height: 23px; margin-right: 4px; }
.stats { width: 365px; height: 120px; margin-top: 11px; background: #41b0e4; padding: 8px 17px 0; color: #fff; font-size: 21.500px; font-weight: 700; flex: none; }
.stat { display: flex; justify-content: space-between; line-height: 30px; }

.support { position: absolute; left: 1319px; top: 200px; width: 31px; height: 190px; background: linear-gradient(90deg, #4a84e4, #3d78d8); color: #fff; border: 1px solid #d8d8d8; border-right: 0; border-radius: 4px 0 0 4px; box-shadow: 0 1px 2px #777; writing-mode: vertical-rl; font: 400 16.300px/30px "Liberation Sans", sans-serif; text-align: center; }

/* Downloads */
.downloads { height: 48px; flex: none; background: #f1f1f1; border-top: 1px solid #d0d0d0; display: flex; align-items: center; padding-left: 4px; position: relative; font-size: 13.200px; color: #333; }
.dl { width: 227px; height: 35px; border-right: 1px solid #cfcfcf; display: flex; align-items: center; padding-left: 16px; flex: none; position: relative; }
.dl-ic { width: 16px; height: 18px; margin-top: -6px; }
.dl-t { margin: 2px 0 0 13px; white-space: nowrap; }
.dl-ch { width: 12px; height: 8px; position: absolute; left: 197px; top: 12px; }
.dl-all { margin-left: auto; margin-right: 37px; width: 100px; height: 28px; background: #fafafa; border: 1px solid #a9a9a9; border-radius: 2px; font: 500 12.500px "Lato", sans-serif; color: #111; margin-top: -3px; }
.dl-x { width: 12px; height: 12px; position: absolute; left: 1342px; top: 17px; }

/* Taskbar */
.taskbar { height: 40px; flex: none; display: flex; padding-left: 15px; background: linear-gradient(90deg, #c4665a 0, #bd7a6a 6%, #b97e6c 40%, #c4665a 50%, #c06a5c 56%, #bc7f6d 66%, #bb7d6c 100%); position: relative; }
.task { width: 62px; height: 40px; display: flex; align-items: center; justify-content: center; flex: none; }
.ti { width: 32px; height: 32px; }
.task-act { width: 60px; height: 38px; margin: 1px 1px 0; background: #d9a6a0; border: 1px solid #f6e6e4; outline: 1px solid #8f5a52; }
.task-open { width: 60px; height: 38px; margin: 1px 1px 0; background: #c98d82; border: 1px solid #d5a89f; }
.tray { position: absolute; left: 1118px; top: 0; height: 40px; display: flex; align-items: center; color: #fff; gap: 11px; }
.tr-up { width: 9px; height: 6px; }
.tr-cloud { width: 16px; height: 12px; }
.tr-ic { width: 14px; height: 16px; }
.tr-lang { font-size: 12px; margin-left: 3px; }
.tr-clock { display: flex; flex-direction: column; align-items: center; font-size: 11px; line-height: 17px; margin-left: 8px; }
```
